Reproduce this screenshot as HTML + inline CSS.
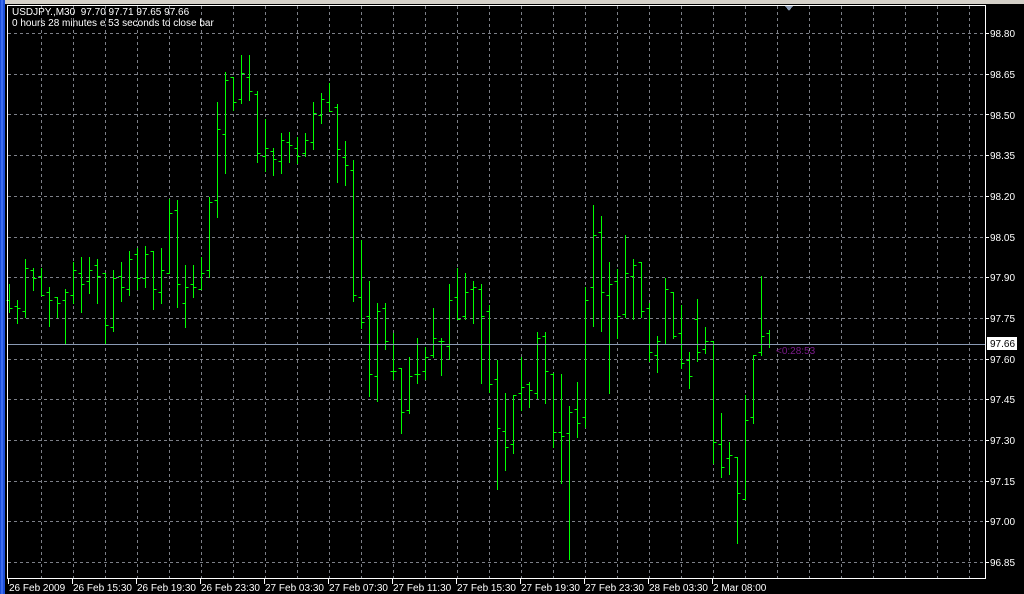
<!DOCTYPE html>
<html><head><meta charset="utf-8">
<style>
html,body{margin:0;padding:0;background:#000;width:1024px;height:594px;overflow:hidden}
svg{display:block}
text{font-family:"Liberation Sans",sans-serif;font-size:10px;white-space:pre}
</style></head><body>
<svg id="s" width="1024" height="594" xmlns="http://www.w3.org/2000/svg" shape-rendering="crispEdges">
<rect width="1024" height="594" fill="#000"/>
<rect x="0" y="0" width="1024" height="4" fill="#d4d0c8"/>
<rect x="0" y="0" width="5" height="594" fill="#1c4fd8"/>
<rect x="1" y="0" width="2" height="594" fill="#3d6cf0"/>
<g id="grid"></g>
<g id="bars" stroke="#00ff00" stroke-width="1"></g>
<line x1="8" y1="344.5" x2="985" y2="344.5" stroke="#8a9ab4"/>
<rect x="7" y="5" width="1" height="574" fill="#fff"/>
<rect x="7" y="5" width="979" height="1" fill="#fff"/>
<rect x="985" y="5" width="1" height="574" fill="#fff"/>
<rect x="7" y="578" width="979" height="1" fill="#fff"/>
<polygon points="785,6 793,6 789,11" fill="#8a9ab4"/>
<g id="ticks" stroke="#fff"></g>
<text x="12" y="15" fill="#fff" xml:space="preserve">USDJPY.,M30  97.70 97.71 97.65 97.66</text>
<text x="12" y="26" fill="#fff" xml:space="preserve">0 hours 28 minutes e 53 seconds to close bar</text>
<text x="776" y="354" fill="#7a1a8a">&lt;0:28:53</text>
<g fill="#fff">
<text x="990" y="37">98.80</text>
<text x="990" y="78">98.65</text>
<text x="990" y="119">98.50</text>
<text x="990" y="159">98.35</text>
<text x="990" y="200">98.20</text>
<text x="990" y="241">98.05</text>
<text x="990" y="281">97.90</text>
<text x="990" y="322">97.75</text>
<text x="990" y="363">97.60</text>
<text x="990" y="403">97.45</text>
<text x="990" y="444">97.30</text>
<text x="990" y="485">97.15</text>
<text x="990" y="525">97.00</text>
<text x="990" y="566">96.85</text>
</g>
<rect x="987" y="337" width="30" height="13" fill="#fff"/>
<text x="990" y="347" fill="#000">97.66</text>
<g fill="#fff">
<text x="9" y="591">26 Feb 2009</text>
<text x="73" y="591">26 Feb 15:30</text>
<text x="137" y="591">26 Feb 19:30</text>
<text x="201" y="591">26 Feb 23:30</text>
<text x="265" y="591">27 Feb 03:30</text>
<text x="329" y="591">27 Feb 07:30</text>
<text x="393" y="591">27 Feb 11:30</text>
<text x="457" y="591">27 Feb 15:30</text>
<text x="521" y="591">27 Feb 19:30</text>
<text x="585" y="591">27 Feb 23:30</text>
<text x="649" y="591">28 Feb 03:30</text>
<text x="713" y="591">2 Mar 08:00</text>
</g>
</svg>
<script>
var NS="http://www.w3.org/2000/svg";
function L(g,x1,y1,x2,y2,st,da){var l=document.createElementNS(NS,"line");l.setAttribute("x1",x1);l.setAttribute("y1",y1);l.setAttribute("x2",x2);l.setAttribute("y2",y2);if(st)l.setAttribute("stroke",st);if(da)l.setAttribute("stroke-dasharray",da);g.appendChild(l);}
var grid=document.getElementById("grid");
for(var x=41;x<985;x+=32)L(grid,x+.5,6,x+.5,578,"#7d8088","3,3");
for(var k=0;k<14;k++){var y=Math.round(33+k*40.7)+.5;L(grid,8,y,985,y,"#7d8088","3,3");}
var t=document.getElementById("ticks");
for(var k=0;k<14;k++){var y=Math.round(33+k*40.7)+.5;L(t,985,y,989,y);}
for(var x=8;x<=712;x+=64)L(t,x+.5,578,x+.5,584);
var d=[
[284,312,300,308],[300,323,306,308],[259,317,311,268],[268,290,270,278],[268,295,276,295],
[287,326,292,300],[297,317,297,303],[289,344,300,292],[262,303,295,270],[257,312,273,284],
[257,293,281,270],[259,303,265,276],[273,344,273,325],[270,331,327,278],[262,301,276,287],
[251,295,289,259],[248,289,254,278],[246,287,278,254],[251,309,251,289],[248,303,292,270],
[199,273,273,213],[200,307,210,284],[265,327,303,287],[265,297,284,287],[257,289,289,273],
[197,277,270,202],[102,217,200,129],[72,173,134,80],[77,110,77,102],[55,103,99,73],
[55,100,77,91],[91,162,94,153],[119,171,156,148],[148,175,151,159],[133,173,161,140],
[132,162,142,145],[137,163,148,156],[133,156,153,140],[102,149,142,113],[93,123,115,99],
[83,111,102,111],[104,182,107,149],[141,185,157,165],[160,301,170,295],[240,328,297,322],
[281,396,316,374],[303,401,376,311],[303,349,308,341],[333,379,371,371],[368,433,368,412],
[357,413,410,376],[338,383,374,374],[347,379,371,357],[308,357,355,338],[338,375,341,341],
[284,359,346,300],[268,319,297,319],[273,319,316,292],[281,323,289,287],[284,383,289,316],
[305,392,311,384],[360,489,379,428],[393,470,431,447],[395,453,444,395],[357,410,393,387],
[382,407,384,390],[332,398,393,338],[332,403,336,371],[373,447,374,432],[374,483,432,436],
[406,559,433,412],[382,437,409,423],[287,427,417,300],[205,326,287,235],[216,331,232,292],
[262,393,295,284],[269,338,281,316],[235,317,314,273],[259,319,276,265],[262,317,262,311],
[303,361,308,352],[336,372,355,341],[278,344,344,289],[292,338,292,336],[305,368,333,363],
[352,388,360,376],[299,361,319,352],[327,353,349,341],[341,463,341,442],[413,477,444,467],
[442,474,458,455],[457,543,457,493],[395,499,499,420],[355,423,417,355],[276,355,352,336],
[330,347,333,344]];
var b=document.getElementById("bars");
for(var i=0;i<d.length;i++){var x=9+8*i+.5,r=d[i];
L(b,x,r[0],x,r[1]+1);L(b,x-3,r[2]+.5,x,r[2]+.5);L(b,x,r[3]+.5,x+3,r[3]+.5);}
</script>
</body></html>
